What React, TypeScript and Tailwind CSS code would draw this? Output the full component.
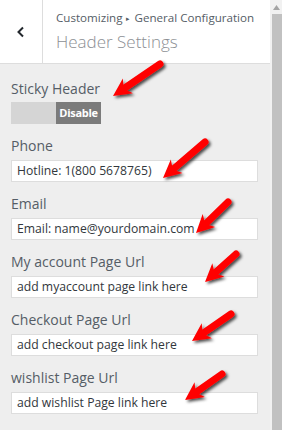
import React from "react";

type Pt = [number, number];

const arrows: { tail: Pt; tip: Pt }[] = [
  { tail: [160, 64], tip: [113, 96] },
  { tail: [205, 142], tip: [163, 178] },
  { tail: [228, 202], tip: [196, 233] },
  { tail: [236, 254], tip: [205, 282] },
  { tail: [231, 314], tip: [192, 341] },
  { tail: [222, 374], tip: [185, 400] },
];

const Arrow = ({ tail, tip }: { tail: Pt; tip: Pt }) => {
  const dx = tip[0] - tail[0];
  const dy = tip[1] - tail[1];
  const len = Math.hypot(dx, dy);
  const ux = dx / len;
  const uy = dy / len;
  const nx = -uy;
  const ny = ux;
  const headLen = 15;
  const headW = 9;
  const bx = tip[0] - ux * headLen;
  const by = tip[1] - uy * headLen;
  const head = [
    [tip[0], tip[1]],
    [bx + nx * headW - ux * 3, by + ny * headW - uy * 3],
    [bx + ux * 2, by + uy * 2],
    [bx - nx * headW - ux * 3, by - ny * headW - uy * 3],
  ]
    .map((p) => p.join(","))
    .join(" ");
  return (
    <g filter="url(#shadow)">
      <line
        x1={tail[0]}
        y1={tail[1]}
        x2={bx + ux * 3}
        y2={by + uy * 3}
        stroke="#ff0000"
        strokeWidth={7}
        strokeLinecap="round"
      />
      <polygon points={head} fill="#ff0000" />
    </g>
  );
};

const Field = ({ label, value }: { label: string; value: string }) => (
  <div className="flex flex-col">
    <span className="h-[20px] leading-[20px] text-[14px] text-[#555d66]">{label}</span>
    <div className="mt-[4px] h-[22px] w-[247px] border border-[#dddddd] bg-white pl-[5px] text-[12.2px] leading-[20px] text-[#32373c]">
      {value}
    </div>
  </div>
);

const App = () => {
  return (
    <div
      className="relative flex h-[430px] w-[282px] overflow-hidden bg-[#eeeeee]"
      style={{ fontFamily: '"Open Sans", "Noto Sans", sans-serif' }}
    >
      <div className="flex flex-1 flex-col">
        <div className="flex h-[64px] border-b border-[#dddddd] bg-white">
          <div className="flex w-[43px] items-center justify-center border-r border-[#dddddd]">
            <svg width="10" height="12" viewBox="0 0 10 12">
              <path d="M7 1.5 L2.5 6 L7 10.5" fill="none" stroke="#23282d" strokeWidth="2" />
            </svg>
          </div>
          <div className="flex flex-col pl-[13px] pt-[8px]">
            <span className="text-[11.6px] leading-[20px] text-[#555d66]">
              Customizing <span className="mx-[1px] text-[7px] align-[1px]">▸</span> General Configuration
            </span>
            <span className="text-[17px] font-light leading-[26px] text-[#8c8f94]">Header Settings</span>
          </div>
        </div>
        <div className="flex flex-col gap-[12px] pl-[11px] pt-[15px]">
          <div className="flex flex-col">
            <span className="h-[20px] leading-[20px] text-[14px] text-[#555d66]">Sticky Header</span>
            <div className="mt-[3px] flex h-[22px] w-[90px]">
              <div className="w-[45px] bg-[#d5d5d5]" />
              <div className="flex w-[45px] items-center justify-center bg-[#7b7b7b] text-[11px] font-bold tracking-[-0.3px] text-white">
                Disable
              </div>
            </div>
          </div>
          <Field label="Phone" value="Hotline: 1(800 5678765)" />
          <Field label="Email" value="Email: name@yourdomain.com" />
          <Field label="My account Page Url" value="add myaccount page link here" />
          <Field label="Checkout Page Url" value="add checkout page link here" />
          <Field label="wishlist Page Url" value="add wishlist Page link here" />
        </div>
      </div>
      <div className="flex w-[12px] flex-col bg-[#f1f1f1]">
        <div className="flex h-[14px] items-center justify-center">
          <svg width="7" height="5" viewBox="0 0 7 5">
            <polygon points="3.5,0 7,5 0,5" fill="#a3a3a3" />
          </svg>
        </div>
        <div className="ml-[2px] flex-1 bg-[#c1c1c1]" />
      </div>
      <svg className="pointer-events-none absolute left-0 top-0" width="282" height="430">
        <defs>
          <filter id="shadow" x="-30%" y="-30%" width="160%" height="160%">
            <feDropShadow dx="2" dy="2" stdDeviation="1.5" floodColor="#000" floodOpacity="0.7" />
          </filter>
        </defs>
        {arrows.map((a, i) => (
          <Arrow key={i} tail={a.tail} tip={a.tip} />
        ))}
      </svg>
    </div>
  );
};

export default App;
